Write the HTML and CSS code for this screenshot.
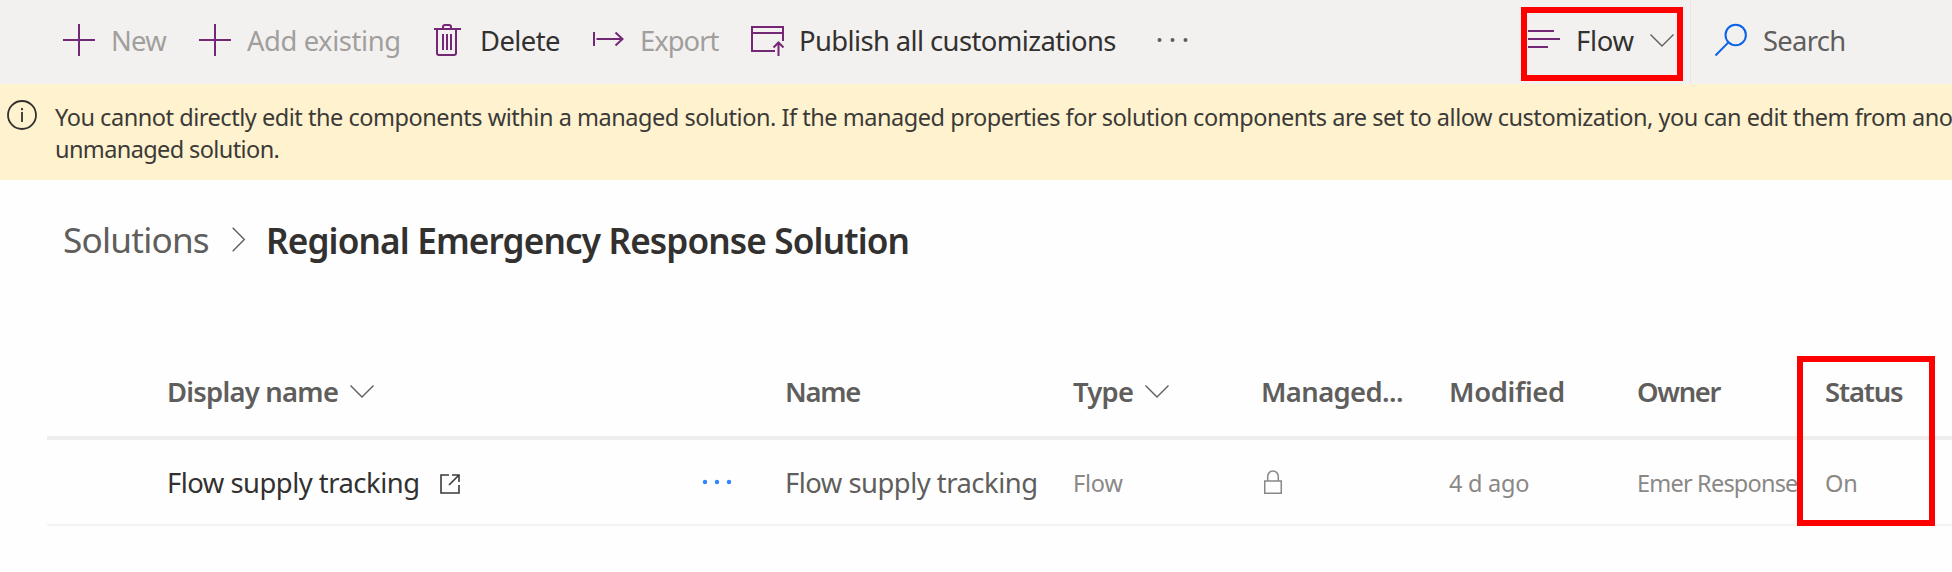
FILE: index.html
```html
<!DOCTYPE html>
<html lang="en">
<head>
<meta charset="utf-8">
<title>Regional Emergency Response Solution</title>
<link rel="stylesheet" href="styles.css">
</head>
<body>
<div class="page">
  <header class="toolbar">
    <div class="command command-new is-disabled">
      <svg class="icon" viewBox="0 0 32 32"><path d="M16 0v32M0 16h32"/></svg>
      <span class="label label-new">New</span>
    </div>
    <div class="command command-add is-disabled">
      <svg class="icon" viewBox="0 0 32 32"><path d="M16 0v32M0 16h32"/></svg>
      <span class="label label-add">Add existing</span>
    </div>
    <div class="command command-delete">
      <svg class="icon" viewBox="0 0 32 32"><path d="M2 5h27M5 5v24q0 2 2 2h15q2 0 2-2V5M11 5V3q0-2 2-2h4q2 0 2 2v2M11 10v16M15 10v16M19 10v16"/></svg>
      <span class="label label-delete">Delete</span>
    </div>
    <div class="command command-export is-disabled">
      <svg class="icon" viewBox="0 0 32 32"><path d="M2 8v14M4.500 15H31M23.500 8.500L30.500 15l-7 6.500"/></svg>
      <span class="label label-export">Export</span>
    </div>
    <div class="command command-publish">
      <svg class="icon icon-publish" viewBox="0 0 33 32"><path d="M24 27H1V3h31v14M1 9h31M27.500 32V19M22.500 23.500l5-5 5 5"/></svg>
      <span class="label label-publish">Publish all customizations</span>
    </div>
    <svg class="more" viewBox="0 0 32 6"><circle cx="2.500" cy="3" r="2"/><circle cx="15.500" cy="3" r="2"/><circle cx="28.500" cy="3" r="2"/></svg>

    <div class="filter">
      <svg class="icon" viewBox="0 0 32 32"><path d="M0 7h26M0 15h32M0 23h20"/></svg>
      <span class="label label-flow">Flow</span>
      <svg class="chevron" viewBox="0 0 24 13"><path d="M.5.5L12 12 23.500.5"/></svg>
      <span class="highlight highlight-filter"></span>
    </div>
    <div class="search">
      <svg class="icon icon-search" viewBox="0 0 32 32"><circle cx="20.700" cy="11" r="10.200"/><path d="M13.400 18.400L.5 31.500"/></svg>
      <span class="label label-search">Search</span>
    </div>
  </header>

  <div class="banner">
    <svg class="info" viewBox="0 0 30 30"><circle cx="15" cy="15" r="14"/><path d="M15 12v10M15 8v2.200"/></svg>
    <p class="message">You cannot directly edit the components within a managed solution. If the managed properties for solution components are set to allow customization, you can edit them from ano<br><span class="message-end">unmanaged solution.</span></p>
  </div>

  <nav class="breadcrumb">
    <span class="crumb">Solutions</span>
    <svg class="crumb-arrow" viewBox="0 0 13 25"><path d="M.7.700L12.300 12.500.7 24.300"/></svg>
    <h1 class="title">Regional Emergency Response Solution</h1>
  </nav>

  <section class="table">
    <div class="row head">
      <span class="cell cell-first"><span class="head-display">Display name</span><svg class="chevron" viewBox="0 0 24 13"><path d="M.5.5L12 12 23.500.5"/></svg></span>
      <span class="cell cell-name head-name">Name</span>
      <span class="cell"><span class="head-type">Type</span><svg class="chevron" viewBox="0 0 24 13"><path d="M.5.5L12 12 23.500.5"/></svg></span>
      <span class="cell head-managed">Managed...</span>
      <span class="cell head-modified">Modified</span>
      <span class="cell head-owner">Owner</span>
      <span class="cell head-status">Status</span>
    </div>
    <div class="row item">
      <span class="cell cell-first item-title">Flow supply tracking<svg class="open" viewBox="0 0 20 20"><path d="M9 1H1v18h18v-8M12 1h7v7M18.500 1.500L9 11"/></svg></span>
      <span class="cell"><svg class="more more-row" viewBox="0 0 32 6"><circle cx="3" cy="3" r="2.200"/><circle cx="15" cy="3" r="2.200"/><circle cx="27" cy="3" r="2.200"/></svg></span>
      <span class="cell item-name">Flow supply tracking</span>
      <span class="cell small item-type">Flow</span>
      <span class="cell"><svg class="lock" viewBox="0 0 18 24"><path d="M.75 11h16.500v12.200H.75zM3.700 11V6.500a5.300 5.500 0 0 1 10.600 0V11"/></svg></span>
      <span class="cell small item-modified">4 d ago</span>
      <span class="cell small item-owner">Emer Response</span>
      <span class="cell small">On</span>
    </div>
    <span class="highlight highlight-status"></span>
  </section>
</div>
</body>
</html>
```

FILE: styles.css
```css
* { box-sizing: border-box; }

body {
  margin: 0;
  background: #fefefe;
  color: #323130;
  font-family: "Noto Sans", "Open Sans", sans-serif;
}

.page {
  width: 1952px;
  height: 572px;
  overflow: hidden;
}

svg {
  display: block;
  flex: none;
  fill: none;
  overflow: visible;
}

/* Toolbar */
.toolbar {
  display: flex;
  height: 84px;
  padding-left: 63px;
  background: #f3f1f0;
  font-size: 27.4px;
  line-height: 40px;
  white-space: nowrap;
}

.command,
.filter,
.search {
  display: flex;
  flex: none;
  align-items: center;
  gap: 16px;
  height: 80px;
}

.command-new { width: 136px; }
.command-add { width: 233px; }
.command-delete { width: 160px; }
.command-export { width: 159px; }
.command-publish { width: 406px; }

.icon {
  width: 32px;
  height: 32px;
  stroke: #742774;
  stroke-width: 2;
}

.icon-publish { width: 33px; }
.icon-search { stroke: #0a63e9; }

.label { padding-top: 2px; }
.is-disabled .label { color: #a19f9d; }

.label-new { letter-spacing: -0.7px; }
.label-add { letter-spacing: -0.42px; }
.label-delete { letter-spacing: -0.55px; }
.label-export { letter-spacing: -0.98px; }
.label-publish { margin-left: -1px; letter-spacing: -0.6px; }
.label-flow { width: 58px; letter-spacing: -0.3px; }
.label-search { color: #605e5c; letter-spacing: -0.72px; }

.more {
  width: 32px;
  height: 6px;
  margin-top: 37px;
  fill: #605e5c;
}

.more-row {
  margin-top: -2px;
  fill: #2f86ff;
}

.filter {
  position: relative;
  width: 163px;
  height: 84px;
  margin-left: auto;
  padding-bottom: 4px;
  gap: 16px;
  border-right: 1px solid #e9e7e6;
}

.search {
  width: 261px;
  padding-left: 24px;
}

.chevron {
  width: 24px;
  height: 13px;
  stroke: #605e5c;
  stroke-width: 1.4;
}

/* Red call-out frames laid over the content */
.highlight {
  position: absolute;
  border: 6px solid #fe0000;
}

.highlight-filter {
  top: 7px;
  left: -7px;
  width: 162px;
  height: 74px;
}

.highlight-status {
  top: 8px;
  left: 1750px;
  width: 138px;
  height: 170px;
}

/* Managed solution notice */
.banner {
  display: flex;
  gap: 18px;
  height: 96px;
  padding: 16px 0 0 7px;
  background: #fff2ce;
}

.info {
  width: 30px;
  height: 30px;
  stroke: #323130;
  stroke-width: 1.8;
}

.message {
  margin: 1px 0 0;
  color: #3b3a38;
  font-size: 23.5px;
  line-height: 32px;
  letter-spacing: -0.465px;
  white-space: nowrap;
}

.message-end { letter-spacing: -0.61px; }

/* Breadcrumb */
.breadcrumb {
  display: flex;
  align-items: center;
  height: 168px;
  padding: 0 0 48px 63px;
  font-size: 35.2px;
  line-height: 48px;
  white-space: nowrap;
}

.crumb {
  width: 169px;
  margin-top: -2px;
  color: #605e5c;
  letter-spacing: -0.8px;
}

.crumb-arrow {
  width: 13px;
  height: 25px;
  margin-right: 21px;
  margin-top: -2px;
  stroke: #605e5c;
  stroke-width: 1.4;
}

.title {
  margin: 0;
  font-size: inherit;
  font-weight: 600;
  letter-spacing: -0.88px;
}

/* Component list */
.table {
  position: relative;
  margin-left: 47px;
  font-size: 27.4px;
  line-height: 40px;
  white-space: nowrap;
}

.row {
  display: grid;
  grid-template-columns: 535px 83px 288px 188px 188px 188px 188px 127px;
  align-items: center;
  padding-left: 120px;
}

.cell {
  display: flex;
  align-items: center;
}

.head {
  height: 92px;
  border-bottom: 4px solid #efedec;
  color: #605e5c;
  font-weight: 600;
}

.cell-name { grid-column: 3; }
.head .chevron { margin: 0 0 1px 12px; }
.head-display { letter-spacing: -0.75px; }
.head-name { letter-spacing: -1.3px; }
.head-type { letter-spacing: -0.75px; }
.head-managed { letter-spacing: -0.6px; }
.head-modified { letter-spacing: -0.3px; }
.head-owner { letter-spacing: -1.3px; }
.head-status { letter-spacing: -1.15px; }

.item {
  height: 86px;
  padding-top: 2px;
  border-bottom: 2px solid #f4f3f2;
}

.item-title { letter-spacing: -0.5px; }
.item-name { color: #605e5c; letter-spacing: -0.5px; }

.small {
  color: #8a8886;
  font-size: 23.5px;
}

.item-type { letter-spacing: -0.2px; }
.item-modified { letter-spacing: -0.25px; }
.item-owner { letter-spacing: -0.8px; }

.open {
  width: 20px;
  height: 20px;
  margin-left: 20px;
  margin-top: 2px;
  stroke: #3b3a38;
  stroke-width: 1.6;
}

.lock {
  width: 18px;
  height: 24px;
  margin-left: 3px;
  margin-bottom: 2px;
  stroke: #8a8886;
  stroke-width: 1.5;
}
```
